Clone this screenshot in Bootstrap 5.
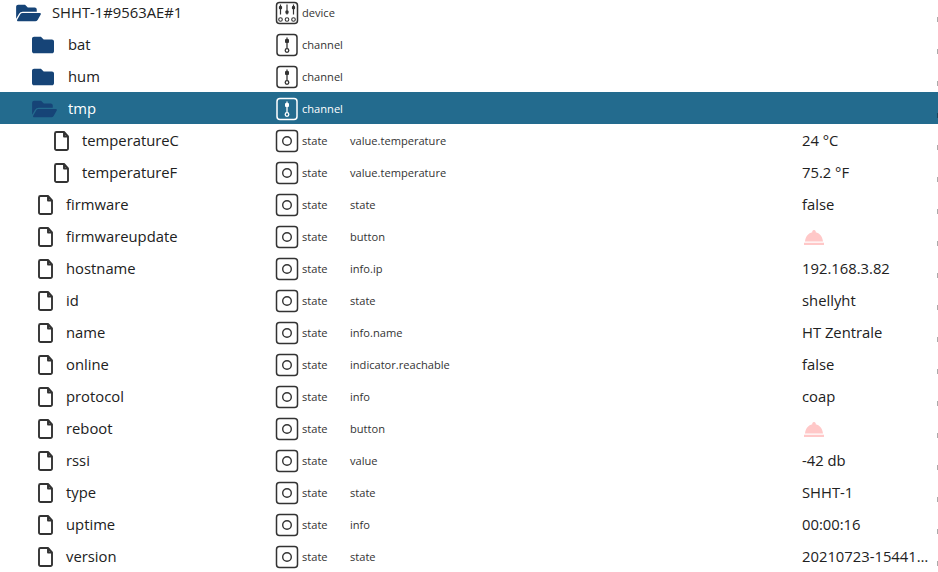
<!DOCTYPE html>
<html lang="en">
<head>
  <meta charset="UTF-8">
  <title>Objects</title>
  <link rel="stylesheet" href="https://cdn.jsdelivr.net/npm/bootstrap@5.3.2/dist/css/bootstrap.min.css">
  <style>
    body { background: #fff; overflow: hidden; font-family: "Open Sans", sans-serif; color: #212121; }
    .tree-list { margin-top: -4px; }
    .tree-row { height: 32px; padding-top: 2px; display: flex; align-items: center; font-size: 14.8px; white-space: nowrap; position: relative; }
    .tree-row::after { content: ""; position: absolute; right: 0; top: 21px; width: 1px; height: 5px; background: rgba(0, 0, 0, .33); }
    .tree-row.active-row { background: #236b8e; color: #fff; }
    .cell-name { width: 275px; flex: none; display: flex; align-items: center; }
    .cell-name svg { flex: none; }
    .cell-name span { padding-bottom: 2px; }
    .cell-type { width: 75px; flex: none; display: flex; align-items: center; font-size: 11.1px; color: #333; }
    .cell-type svg { flex: none; margin-right: 3px; }
    .cell-role { width: 452px; flex: none; font-size: 11.1px; color: #333; }
    .active-row .cell-type { color: #fff; }
    .cell-val { width: 134px; flex: none; padding-bottom: 2px; }
    .lvl0 { padding-left: 16px; }
    .lvl1 { padding-left: 32px; }
    .lvl2 { padding-left: 54px; }
    .lvl1f { padding-left: 38px; }
    .gap-open { margin-left: 11px; }
    .gap-closed { margin-left: 14px; }
    .gap-file { margin-left: 12px; }
    .folder-ico { fill: #164477; }
    .file-ico { fill: none; stroke: #333; stroke-width: 1.9; stroke-linejoin: round; }
    .bell-ico { fill: #ffc8c8; display: block; margin: 3px 0 0 2px; }
  </style>
</head>
<body>
  <svg width="0" height="0" class="position-absolute">
    <symbol id="folderOpen" viewBox="0 0 576 512"><path d="M572.7 292.1L500.3 416.2A64 64 0 0 1 445 448H45c-18.500 0-30-20-20.700-36.100l72.400-124.200A64 64 0 0 1 152 256h400c18.500 0 30 20 20.700 36.100zM152 224h328v-48c0-26.500-21.500-48-48-48H272l-64-64H48C21.500 64 0 85.500 0 112v278l69.100-118.400C86.200 242.300 118 224 152 224z"/></symbol>
    <symbol id="folderClosed" viewBox="0 0 512 512"><path d="M464 128H272l-64-64H48C21.500 64 0 85.500 0 112v288c0 26.500 21.500 48 48 48h416c26.500 0 48-21.500 48-48V176c0-26.500-21.500-48-48-48z"/></symbol>
    <symbol id="fileIco" viewBox="0 0 16 20"><path d="M2.500 1H10l4 4.500V17.500a1.500 1.500 0 0 1-1.500 1.500h-10A1.500 1.500 0 0 1 1 17.500v-15A1.500 1.500 0 0 1 2.500 1zM10 1v4.500h4"/></symbol>
    <symbol id="stateIco" viewBox="0 0 24 24"><rect x="1.500" y="1.500" width="21" height="21" rx="3" fill="none" stroke="currentColor" stroke-width="1.500"/><circle cx="12" cy="12" r="4.300" fill="none" stroke="currentColor" stroke-width="1.400"/></symbol>
    <symbol id="channelIco" viewBox="0 0 24 24"><rect x="2" y="1.500" width="20" height="21" rx="3" fill="none" stroke="currentColor" stroke-width="1.500"/><path d="M12 4.500v11" stroke="currentColor" stroke-width="1.300"/><rect x="10" y="6" width="4" height="4" rx="1" fill="currentColor"/><circle cx="12" cy="17.500" r="1.800" fill="none" stroke="currentColor" stroke-width="1.300"/></symbol>
    <symbol id="deviceIco" viewBox="0 0 24 24"><rect x="1.500" y="1.500" width="21" height="21" rx="3" fill="none" stroke="currentColor" stroke-width="1.500"/><path d="M5.500 3.500v10M12 3.500v10M18.500 3.500v10" stroke="currentColor" stroke-width="1.200"/><rect x="3.900" y="5" width="3.200" height="3.200" rx="1" fill="currentColor"/><rect x="10.400" y="9.500" width="3.200" height="3.200" rx="1" fill="currentColor"/><rect x="16.900" y="5" width="3.200" height="3.200" rx="1" fill="currentColor"/><circle cx="5.500" cy="18.500" r="1.800" fill="none" stroke="currentColor" stroke-width="1.100"/><circle cx="12" cy="18.500" r="1.800" fill="none" stroke="currentColor" stroke-width="1.100"/><circle cx="18.500" cy="18.500" r="1.800" fill="none" stroke="currentColor" stroke-width="1.100"/></symbol>
    <symbol id="bellIco" viewBox="0 0 20 15"><path d="M10 0a1.700 1.700 0 0 1 1.700 2.200C15.500 3 18.500 6.500 19 11.500H1C1.500 6.500 4.500 3 8.300 2.200A1.700 1.700 0 0 1 10 0zM0 12.800h20V15H0z"/></symbol>
  </svg>

  <div class="tree-list" id="treeList"></div>

  <script>
    const rows = [
      ["SHHT-1#9563AE#1", "device", "", "", "open", 0],
      ["bat", "channel", "", "", "closed", 1],
      ["hum", "channel", "", "", "closed", 1],
      ["tmp", "channel", "", "", "open", 1, true],
      ["temperatureC", "state", "value.temperature", "24 °C", "file", 2],
      ["temperatureF", "state", "value.temperature", "75.2 °F", "file", 2],
      ["firmware", "state", "state", "false", "file", 3],
      ["firmwareupdate", "state", "button", "bell", "file", 3],
      ["hostname", "state", "info.ip", "192.168.3.82", "file", 3],
      ["id", "state", "state", "shellyht", "file", 3],
      ["name", "state", "info.name", "HT Zentrale", "file", 3],
      ["online", "state", "indicator.reachable", "false", "file", 3],
      ["protocol", "state", "info", "coap", "file", 3],
      ["reboot", "state", "button", "bell", "file", 3],
      ["rssi", "state", "value", "-42 db", "file", 3],
      ["type", "state", "state", "SHHT-1", "file", 3],
      ["uptime", "state", "info", "00:00:16", "file", 3],
      ["version", "state", "state", "20210723-15441…", "file", 3]
    ];

    const lvlClass = ["lvl0", "lvl1", "lvl2", "lvl1f"];

    function nameIcon(kind) {
      if (kind === "file") return `<svg class="file-ico" width="16" height="20"><use href="#fileIco"/></svg>`;
      if (kind === "open") return `<svg class="folder-ico" width="25" height="22"><use href="#folderOpen"/></svg>`;
      return `<svg class="folder-ico" width="22" height="22"><use href="#folderClosed"/></svg>`;
    }

    function typeIcon(type) {
      return `<svg width="24" height="24"><use href="#${type}Ico"/></svg>`;
    }

    const list = document.getElementById("treeList");
    rows.forEach(([name, type, role, val, kind, level, active]) => {
      const row = document.createElement("div");
      row.className = "tree-row" + (active ? " active-row" : "");
      const valHtml = val === "bell"
        ? `<svg class="bell-ico" width="20" height="15"><use href="#bellIco"/></svg>`
        : val;
      row.innerHTML = `
        <div class="cell-name ${lvlClass[level]}">${nameIcon(kind)}<span class="gap-${kind}">${name}</span></div>
        <div class="cell-type">${typeIcon(type)}<span>${type}</span></div>
        <div class="cell-role">${role}</div>
        <div class="cell-val">${valHtml}</div>`;
      list.appendChild(row);
    });
  </script>
  <script src="https://cdn.jsdelivr.net/npm/bootstrap@5.3.2/dist/js/bootstrap.bundle.min.js"></script>
</body>
</html>
